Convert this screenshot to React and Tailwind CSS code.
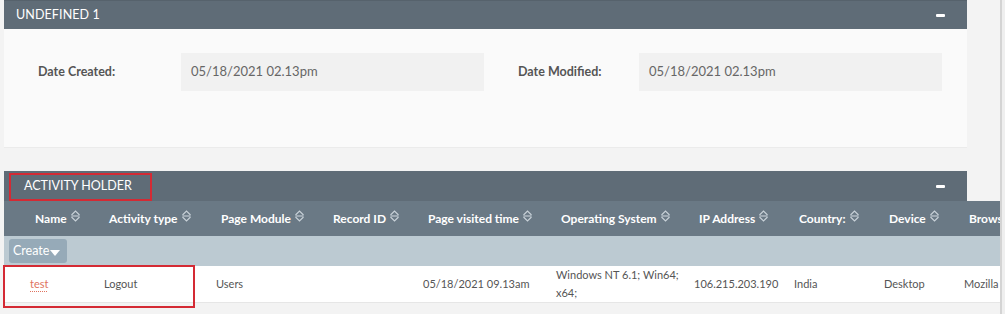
import React from 'react';

const font = { fontFamily: 'Lato, "Noto Sans", sans-serif' };

const columns = [
  { label: 'Name', w: 'w-[74px]' },
  { label: 'Activity type', w: 'w-[112px]' },
  { label: 'Page Module', w: 'w-[112px]' },
  { label: 'Record ID', w: 'w-[95px]' },
  { label: 'Page visited time', w: 'w-[133px]' },
  { label: 'Operating System', w: 'w-[138px]' },
  { label: 'IP Address', w: 'w-[100px]' },
  { label: 'Country:', w: 'w-[90px]' },
  { label: 'Device', w: 'w-[80px]' },
  { label: 'Browser', w: 'w-[80px]' },
];

function SortIcon() {
  return (
    <svg width="11" height="12" viewBox="0 0 11 12" className="ml-[3px] -mt-[6px] shrink-0">
      <path d="M1.5 5 L5.5 1 L9.5 5" fill="none" stroke="#c9d2d9" strokeWidth="1.1" />
      <path d="M1.5 7 L5.5 11 L9.5 7" fill="none" stroke="#c9d2d9" strokeWidth="1.1" />
      <path d="M1.5 6 H9.5" stroke="#c9d2d9" strokeWidth="1.1" />
    </svg>
  );
}

function Minus() {
  return <span className="block w-[9px] h-[3px] bg-white rounded-[1px]" />;
}

export default function App() {
  const row = ['Logout', 'Users', '', '05/18/2021 09.13am', null, '106.215.203.190', 'India', 'Desktop', 'Mozilla'];

  return (
    <div className="relative w-[1005px] h-[314px] bg-[#f3f3f3] overflow-hidden" style={font}>
      <div className="flex h-full">
        <div className="w-[1000px] pl-[4px] overflow-hidden">
          {/* panel 1 */}
          <div className="w-[963px]">
            <div className="h-[29px] bg-[#5f6c77] flex items-center justify-between pl-[12px] pr-[22px] border-t border-[#56626c]">
              <span className="text-white text-[12.5px] tracking-[0.1px]">UNDEFINED 1</span>
              <Minus />
            </div>
            <div className="h-[119px] bg-[#fafafa] border-b border-[#ebebeb] flex items-start pt-[24px]">
              <div className="w-[177px] h-[38px] flex items-center pl-[34px] text-[12.5px] font-bold text-[#555]">Date Created:</div>
              <div className="w-[303px] h-[38px] bg-[#f1f1f1] flex items-center pl-[10px] text-[13px] text-[#666]">05/18/2021 02.13pm</div>
              <div className="w-[155px] h-[38px] flex items-center pl-[34px] text-[12.5px] font-bold text-[#555]">Date Modified:</div>
              <div className="w-[303px] h-[38px] bg-[#f1f1f1] flex items-center pl-[10px] text-[13px] text-[#666]">05/18/2021 02.13pm</div>
            </div>
          </div>

          {/* panel 2 */}
          <div className="mt-[23px]">
            <div className="w-[963px] h-[30px] bg-[#5f6c77] flex items-center justify-between pl-[20px] pr-[22px]">
              <span className="text-white text-[12.5px]">ACTIVITY HOLDER</span>
              <Minus />
            </div>
            <div className="w-[1100px]">
              <div className="h-[35px] bg-[#6a7985] flex items-center">
                <div className="w-[22px] shrink-0" />
                {columns.map((c) => (
                  <div key={c.label} className={`${c.w} shrink-0 pl-[9px] flex items-center text-[12px] font-bold text-white whitespace-nowrap`}>
                    {c.label}
                    <SortIcon />
                  </div>
                ))}
              </div>
              <div className="h-[30px] bg-[#bccad2] flex items-center pl-[5px]">
                <div className="h-[24px] w-[58px] bg-[#96aab8] rounded-[3px] flex items-center pl-[4px] text-white text-[12.5px]">
                  Create
                  <svg width="10" height="6" viewBox="0 0 10 6" className="ml-[1px] mt-[4px]">
                    <path d="M0 0 H10 L5 6 Z" fill="#fff" />
                  </svg>
                </div>
              </div>
              <div className="h-[37px] bg-white border-b border-[#e6e6e6] flex items-center text-[11px] text-[#555]">
                <div className="w-[22px] shrink-0" />
                <div className="w-[74px] shrink-0 pl-[4px]">
                  <span className="text-[#e0735f] underline decoration-dotted decoration-[#e0735f] underline-offset-[3px]">test</span>
                </div>
                {row.map((v, i) => (
                  <div key={i} className={`${columns[i + 1].w} shrink-0 pl-[4px] leading-[18px]`}>
                    {v === null ? (
                      <span className="block pr-[4px]">Windows NT 6.1; Win64; x64;</span>
                    ) : (
                      v
                    )}
                  </div>
                ))}
              </div>
            </div>
          </div>
        </div>
        <div className="w-[5px] border-l-2 border-[#d4d4d4] bg-[#efefef]" />
      </div>

      {/* annotation boxes */}
      <div className="absolute left-[9px] top-[173px] w-[143px] h-[28px] border-2 border-[#d42a34]" />
      <div className="absolute left-[3px] top-[265px] w-[192px] h-[43px] border-2 border-[#d42a34]" />
    </div>
  );
}
